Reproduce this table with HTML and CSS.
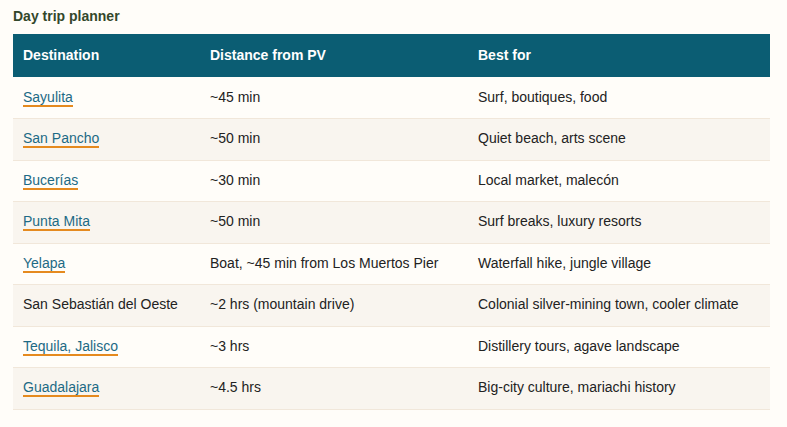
FILE: index.html
```html
<!DOCTYPE html>
<html>
<head>
<meta charset="utf-8">
<link rel="stylesheet" href="styles.css">
</head>
<body>
<div class="wrap">
  <h3 class="title">Day trip planner</h3>
  <table class="trips">
    <thead>
      <tr><th class="c1">Destination</th><th class="c2">Distance from PV</th><th class="c3">Best for</th></tr>
    </thead>
    <tbody>
      <tr><td><a href="#">Sayulita</a></td><td>~45 min</td><td>Surf, boutiques, food</td></tr>
      <tr><td><a href="#">San Pancho</a></td><td>~50 min</td><td>Quiet beach, arts scene</td></tr>
      <tr><td><a href="#">Bucerías</a></td><td>~30 min</td><td>Local market, malecón</td></tr>
      <tr><td><a href="#">Punta Mita</a></td><td>~50 min</td><td>Surf breaks, luxury resorts</td></tr>
      <tr><td><a href="#">Yelapa</a></td><td>Boat, ~45 min from Los Muertos Pier</td><td>Waterfall hike, jungle village</td></tr>
      <tr><td>San Sebastián del Oeste</td><td>~2 hrs (mountain drive)</td><td>Colonial silver-mining town, cooler climate</td></tr>
      <tr><td><a href="#">Tequila, Jalisco</a></td><td>~3 hrs</td><td>Distillery tours, agave landscape</td></tr>
      <tr><td><a href="#">Guadalajara</a></td><td>~4.5 hrs</td><td>Big-city culture, mariachi history</td></tr>
    </tbody>
  </table>
</div>
</body>
</html>
```
FILE: styles.css
```css
html, body {
  margin: 0;
  padding: 0;
  background: #fffdf9;
}
body {
  font-family: "Liberation Sans", Arial, sans-serif;
  color: #222;
}
.wrap {
  padding: 7px 17px 0 13px;
}
.title {
  margin: 0 0 8px 0;
  font-size: 14px;
  font-weight: bold;
  color: #33472b;
  line-height: 19px;
}
.trips {
  width: 757px;
  table-layout: fixed;
  border-collapse: collapse;
  font-size: 14px;
}
.trips th {
  background: #0b5d73;
  color: #fff;
  font-weight: bold;
  text-align: left;
  height: 43px;
  padding: 0 10px 1px;
  box-sizing: border-box;
}
.c1 { width: 187px; }
.c2 { width: 268px; }
.c3 { width: 302px; }
.trips td {
  height: 41.5px;
  padding: 0 10px 2px;
  border-bottom: 1px solid #f1e7da;
  box-sizing: border-box;
  color: #222;
}
.trips tbody tr:nth-child(even) td {
  background: #f9f5ef;
}
.trips a {
  color: #1d6a85;
  text-decoration: none;
  border-bottom: 2px solid #e58a1f;
  padding-bottom: 0;
}
```
